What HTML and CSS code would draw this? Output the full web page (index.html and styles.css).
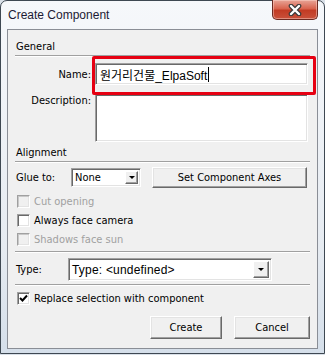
FILE: index.html
```html
<!DOCTYPE html>
<html lang="en">
<head>
    <meta charset="UTF-8">
    <title>Create Component</title>
    <link rel="stylesheet" href="styles.css">
</head>
<body>
    <div class="window">
        <div class="titlebar">
            <span class="title">Create Component</span>
            <div class="close">
                <svg width="14" height="12" viewBox="0 0 14 12">
                    <path d="M3 2 L11 10 M11 2 L3 10" stroke="#3b3b3b" stroke-width="4.6" stroke-linecap="round"/>
                    <path d="M3 2 L11 10 M11 2 L3 10" stroke="#fff" stroke-width="2.4" stroke-linecap="round"/>
                </svg>
            </div>
        </div>

        <div class="client">
            <div class="group-head">General</div>

            <div class="fields">
                <div class="field-label">Name:</div>
                <div class="textbox name-box">원거리건물_ElpaSoft<span class="caret"></span></div>
                <div class="field-label top">Description:</div>
                <div class="textbox desc-box"></div>
            </div>

            <!-- red marker drawn over the name field -->
            <div class="marker"></div>

            <div class="group-head spaced">Alignment</div>

            <div class="glue-row">
                <span class="glue-label">Glue to:</span>
                <div class="select glue-select">
                    <span class="select-text">None</span>
                    <span class="arrow-btn"><span class="arrow"></span></span>
                </div>
                <div class="btn axes-btn">Set Component Axes</div>
            </div>

            <div class="check-row disabled"><span class="check"></span>Cut opening</div>
            <div class="check-row"><span class="check"></span>Always face camera</div>
            <div class="check-row disabled"><span class="check"></span>Shadows face sun</div>

            <div class="sep"></div>

            <div class="type-row">
                <span class="type-label">Type:</span>
                <div class="select type-select">
                    <span class="select-text gulim">Type: &lt;undefined&gt;</span>
                    <span class="arrow-btn"><span class="arrow"></span></span>
                </div>
            </div>

            <div class="sep sep-b"></div>

            <div class="check-row replace">
                <span class="check checked">
                    <svg width="9" height="9" viewBox="0 0 9 9">
                        <path d="M1 4 L3.5 6.5 L8 1.5" fill="none" stroke="#000" stroke-width="2"/>
                    </svg>
                </span>Replace selection with component
            </div>

            <div class="actions">
                <div class="btn create-btn">Create</div>
                <div class="btn cancel-btn">Cancel</div>
            </div>
        </div>
    </div>
</body>
</html>
```

FILE: styles.css
```css
* {
    box-sizing: border-box;
}

body {
    margin: 0;
    background: #d9e0e8;
    font-family: "DejaVu Sans Condensed", "DejaVu Sans", sans-serif;
    font-stretch: condensed;
    font-size: 11px;
    color: #000;
}

.window {
    width: 325px;
    height: 354px;
    border: 1px solid #3e4852;
    border-radius: 7px 7px 0 0;
    background: linear-gradient(#f6f8fb, #e6ebf1 70%, #d5dfea);
    padding: 0 6px 4px;
    display: flex;
    flex-direction: column;
}

.titlebar {
    height: 28px;
    display: flex;
    align-items: flex-start;
}

.title {
    padding: 7px 0 0 1px;
    font-family: "Liberation Sans", sans-serif;
    font-stretch: normal;
    font-size: 12px;
    line-height: 15px;
    color: #1c1a34;
}

.close {
    margin-left: auto;
    margin-top: -1px;
    width: 46px;
    height: 20px;
    border: 1px solid #6b2a22;
    border-top: none;
    border-radius: 0 0 5px 5px;
    background: linear-gradient(#e8a497, #d9644f 45%, #c23b24 55%, #c9513b);
    box-shadow: inset 0 0 0 1px rgba(255, 220, 210, 0.45);
    display: flex;
    align-items: center;
    justify-content: center;
}

.client {
    flex: 1;
    position: relative;
    border: 1px solid #8a8e96;
    background: #f0f0f0;
    padding: 9px 7px 0;
    display: flex;
    flex-direction: column;
}

.group-head {
    line-height: 16px;
    padding-left: 1px;
    border-bottom: 1px solid #a0a0a0;
    box-shadow: 0 1px #fff;
}

.group-head.spaced {
    margin-top: 3px;
}

.fields {
    margin-top: 7px;
    display: grid;
    grid-template-columns: 76px 213px;
    column-gap: 4px;
    row-gap: 9px;
}

.field-label {
    text-align: right;
    align-self: center;
    line-height: 13px;
}

.field-label.top {
    align-self: start;
}

.textbox {
    background: #fff;
    border: 1px solid;
    border-color: #a0a0a0 #fff #fff #a0a0a0;
    box-shadow: inset 1px 1px #696969, inset -1px -1px #e3e3e3;
}

.name-box {
    height: 22px;
    padding: 0 4px;
    display: flex;
    align-items: center;
    font-family: "Liberation Sans", "Noto Sans CJK KR", sans-serif;
    font-stretch: normal;
    font-size: 12px;
}

.caret {
    width: 1px;
    height: 15px;
    background: #000;
    margin-left: 1px;
}

.desc-box {
    height: 48px;
}

.marker {
    position: absolute;
    left: 84px;
    top: 26px;
    width: 224px;
    height: 39px;
    border: 3px solid #e60012;
    border-radius: 2px;
}

.glue-row {
    margin-top: 5px;
    height: 21px;
    display: flex;
    align-items: center;
}

.glue-label {
    width: 56px;
    padding-left: 1px;
}

.select {
    height: 19px;
    background: #fff;
    border: 1px solid;
    border-color: #a0a0a0 #fff #fff #a0a0a0;
    box-shadow: inset 1px 1px #696969, inset -1px -1px #e3e3e3;
    display: flex;
    align-items: center;
    padding: 2px 2px 2px 3px;
}

.select-text {
    flex: 1;
}

.glue-select {
    width: 70px;
}

.arrow-btn {
    width: 13px;
    height: 100%;
    background: #f0f0f0;
    border: 1px solid;
    border-color: #fff #696969 #696969 #fff;
    box-shadow: inset -1px -1px #a0a0a0;
    display: flex;
    align-items: center;
    justify-content: center;
}

.arrow {
    width: 0;
    height: 0;
    border-left: 3px solid transparent;
    border-right: 3px solid transparent;
    border-top: 3px solid #000;
}

.btn {
    height: 23px;
    background: #f0f0f0;
    border: 1px solid;
    border-color: #fff #696969 #696969 #fff;
    box-shadow: inset -1px -1px #a0a0a0, inset 1px 1px #e3e3e3;
    display: flex;
    align-items: center;
    justify-content: center;
}

.axes-btn {
    margin-left: 11px;
    width: 155px;
    height: 21px;
}

.check-row {
    height: 19px;
    display: flex;
    align-items: center;
    padding-left: 2px;
}

.glue-row + .check-row {
    margin-top: 4px;
}

.check {
    width: 13px;
    height: 13px;
    margin-right: 4px;
    background: #fff;
    border: 1px solid;
    border-color: #a0a0a0 #fff #fff #a0a0a0;
    box-shadow: inset 1px 1px #696969, inset -1px -1px #e3e3e3;
    display: flex;
    align-items: center;
    justify-content: center;
}

.check-row.disabled {
    color: #a0a0a0;
}

.check-row.disabled .check {
    background: #f0f0f0;
    box-shadow: inset 1px 1px #c8c8c8, inset -1px -1px #e3e3e3;
}

.sep {
    margin-top: 2px;
    border-top: 1px solid #a0a0a0;
    border-bottom: 1px solid #fff;
}

.sep-b {
    margin-top: 3px;
}

.type-row {
    margin-top: 5px;
    height: 23px;
    display: flex;
    align-items: center;
}

.type-label {
    width: 53px;
    padding-left: 1px;
}

.type-select {
    width: 204px;
    height: 23px;
}

.gulim {
    font-family: "Liberation Sans", "Noto Sans CJK KR", sans-serif;
    font-stretch: normal;
    font-size: 12px;
    letter-spacing: 0.2px;
}

.type-select .arrow-btn {
    width: 16px;
}

.replace {
    margin-top: 3px;
}

.actions {
    margin-top: 8px;
    display: flex;
    justify-content: flex-end;
    gap: 12px;
}

.create-btn {
    width: 72px;
}

.cancel-btn {
    width: 76px;
}
```
